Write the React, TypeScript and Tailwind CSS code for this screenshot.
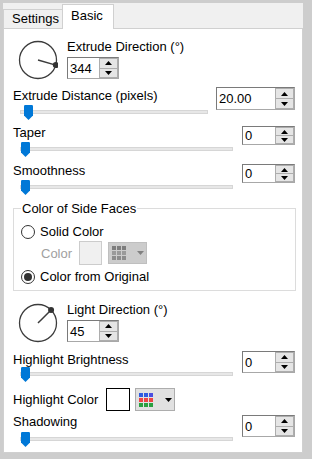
import React from "react";

function Tri({ up, color = "#000" }: { up?: boolean; color?: string }) {
  return (
    <svg width="7" height="4" viewBox="0 0 7 4" className="block">
      <path d={up ? "M0 4L3.5 0L7 4Z" : "M0 0L7 0L3.5 4Z"} fill={color} />
    </svg>
  );
}

function Spin({ value, className }: { value: string; className: string }) {
  return (
    <div className={"flex border-t border-l border-t-[#7a7a7a] border-l-[#7a7a7a] border-b border-r border-b-[#a8a8a8] border-r-[#a8a8a8] bg-white " + className}>
      <div className="flex-1 flex items-center pl-[2px] text-black">{value}</div>
      <div className="w-[19px] flex flex-col">
        <div className="flex-1 flex items-center justify-center bg-[#e5e5e5] border border-[#adadad]">
          <Tri up />
        </div>
        <div className="flex-1 flex items-center justify-center bg-[#e5e5e5] border border-t-0 border-[#adadad]">
          <Tri />
        </div>
      </div>
    </div>
  );
}

function Slider({ thumbClass, className }: { thumbClass: string; className: string }) {
  return (
    <div className={"relative h-[15px] " + className}>
      <div className="mt-[5px] h-[4px] bg-[#e7e7e7] border border-[#d6d6d6]" />
      <svg width="9" height="15" viewBox="0 0 9 15" className={"absolute top-0 " + thumbClass}>
        <path d="M1.2 0H7.8Q9 0 9 1.2V10.5L4.5 15L0 10.5V1.2Q0 0 1.2 0Z" fill="#0078d7" />
      </svg>
    </div>
  );
}

function Dial({ angle, className }: { angle: number; className: string }) {
  const r = 18.5;
  const cx = 20;
  const cy = 20;
  const a = (angle * Math.PI) / 180;
  const x = cx + r * Math.cos(a);
  const y = cy - r * Math.sin(a);
  return (
    <svg width="40" height="40" viewBox="0 0 40 40" className={"block shrink-0 " + className}>
      <circle cx={cx} cy={cy} r={r} fill="none" stroke="#3c3c3c" strokeWidth="1.3" />
      <line x1={cx} y1={cy} x2={x} y2={y} stroke="#3c3c3c" strokeWidth="1.5" />
      <circle cx={x} cy={y} r="3" fill="#333" />
    </svg>
  );
}

function Grid({ colors }: { colors: string[] }) {
  const cells = [];
  for (let i = 0; i < 9; i++) {
    const cx = (i % 3) * 5;
    const cy = Math.floor(i / 3) * 5;
    cells.push(<rect key={i} x={cx} y={cy} width="4" height="4" fill={colors[i]} />);
  }
  return (
    <svg width="14" height="14" viewBox="0 0 14 14" className="block">
      {cells}
    </svg>
  );
}

function Radio({ checked }: { checked?: boolean }) {
  return (
    <div className="w-[14px] h-[14px] rounded-full border border-[#333] bg-white flex items-center justify-center shrink-0">
      {checked && <div className="w-[8px] h-[8px] rounded-full bg-[#333]" />}
    </div>
  );
}

export default function App() {
  const gray = ["#7d7d7d", "#7d7d7d", "#7d7d7d", "#9a9a9a", "#9a9a9a", "#9a9a9a", "#8c8c8c", "#8c8c8c", "#8c8c8c"];
  const col = ["#2f5be0", "#2f5be0", "#4a4ee0", "#ee4444", "#ee4444", "#ee4444", "#2aa040", "#2aa040", "#2aa040"];
  return (
    <div className="w-[312px] h-[459px] bg-[#cdcdcd] pt-[3px] pl-[3px] pr-[9px] pb-[6px] flex flex-col text-[13px] leading-[15px] text-black font-['Liberation_Sans',Arial,sans-serif]">
      <div className="flex-1 flex flex-col bg-[#f0f0f0]">
        <div className="h-[25px] flex items-end">
          <div className="w-[59px] h-[19px] border-t border-l border-[#d0d0d0] bg-[#f0f0f0] pl-[8px] pt-[1px]">Settings</div>
          <div className="w-[52px] h-[25px] -mb-[1px] relative z-10 bg-white border-t border-l border-r border-[#d0d0d0] pl-[8px] pt-[3px]">Basic</div>
        </div>
        <div className="flex-1 bg-white border border-[#d0d0d0] flex flex-col pl-[9px] pr-[7px]">
          {/* Extrude direction */}
          <div className="mt-[10px] flex">
            <Dial angle={344} className="ml-[5px] mt-[1px]" />
            <div className="ml-[9px] flex flex-col">
              <span>Extrude Direction (°)</span>
              <Spin value="344" className="mt-[3px] w-[52px] h-[22px]" />
            </div>
          </div>
          {/* Extrude distance */}
          <div className="mt-[7px] flex items-start">
            <div className="flex-1 flex flex-col">
              <span className="mt-[1px]">Extrude Distance (pixels)</span>
              <Slider thumbClass="left-[4px]" className="ml-[7px] mt-[2px]" />
            </div>
            <Spin value="20.00" className="ml-[8px] w-[79px] h-[23px]" />
          </div>
          {/* Taper */}
          <div className="mt-[5px] flex items-start">
            <div className="flex-1 flex flex-col">
              <span>Taper</span>
              <Slider thumbClass="left-[1px]" className="ml-[7px] mt-[2px]" />
            </div>
            <Spin value="0" className="ml-[9px] mt-[1px] w-[53px] h-[19px]" />
          </div>
          {/* Smoothness */}
          <div className="mt-[6px] flex items-start">
            <div className="flex-1 flex flex-col">
              <span>Smoothness</span>
              <Slider thumbClass="left-[1px]" className="ml-[7px] mt-[2px]" />
            </div>
            <Spin value="0" className="ml-[9px] mt-[1px] w-[53px] h-[19px]" />
          </div>
          {/* Group */}
          <fieldset className="mt-[6px] mr-[-1px] border border-[#dcdcdc] pl-[7px] pb-[6px]">
            <legend className="px-[1px]">Color of Side Faces</legend>
            <div className="mt-[8px] h-[15px] flex items-center">
              <Radio />
              <span className="ml-[5px]">Solid Color</span>
            </div>
            <div className="mt-[2px] h-[24px] flex items-center">
              <span className="ml-[20px] w-[38px] text-[#a0a0a0]">Color</span>
              <div className="w-[23px] h-[24px] bg-[#f0f0f0] border border-[#cccccc]" />
              <div className="ml-[6px] w-[39px] h-[22px] bg-[#cccccc] border border-[#bfbfbf] flex items-center pl-[3px]">
                <Grid colors={gray} />
                <div className="ml-[11px]">
                  <Tri color="#808080" />
                </div>
              </div>
            </div>
            <div className="mt-[4px] h-[15px] flex items-center">
              <Radio checked />
              <span className="ml-[5px]">Color from Original</span>
            </div>
          </fieldset>
          {/* Light direction */}
          <div className="mt-[11px] flex">
            <Dial angle={45} className="ml-[5px] mt-[1px]" />
            <div className="ml-[9px] flex flex-col">
              <span>Light Direction (°)</span>
              <Spin value="45" className="mt-[3px] w-[52px] h-[22px]" />
            </div>
          </div>
          {/* Highlight brightness */}
          <div className="mt-[8px] flex items-start">
            <div className="flex-1 flex flex-col">
              <span className="mt-[1px]">Highlight Brightness</span>
              <Slider thumbClass="left-[1px]" className="ml-[7px] mt-[0px]" />
            </div>
            <Spin value="0" className="ml-[9px] w-[53px] h-[22px]" />
          </div>
          {/* Highlight color */}
          <div className="mt-[6px] h-[23px] flex items-center">
            <span className="w-[93px]">Highlight Color</span>
            <div className="w-[24px] h-[23px] bg-white border border-black" />
            <div className="ml-[5px] w-[40px] h-[23px] bg-[#e1e1e1] border border-[#adadad] flex items-center pl-[3px]">
              <Grid colors={col} />
              <div className="ml-[12px]">
                <Tri />
              </div>
            </div>
          </div>
          {/* Shadowing */}
          <div className="mt-[3px] flex items-start">
            <div className="flex-1 flex flex-col">
              <span>Shadowing</span>
              <Slider thumbClass="left-[1px]" className="ml-[7px] mt-[3px]" />
            </div>
            <Spin value="0" className="ml-[9px] mt-[1px] w-[53px] h-[22px]" />
          </div>
        </div>
      </div>
    </div>
  );
}
